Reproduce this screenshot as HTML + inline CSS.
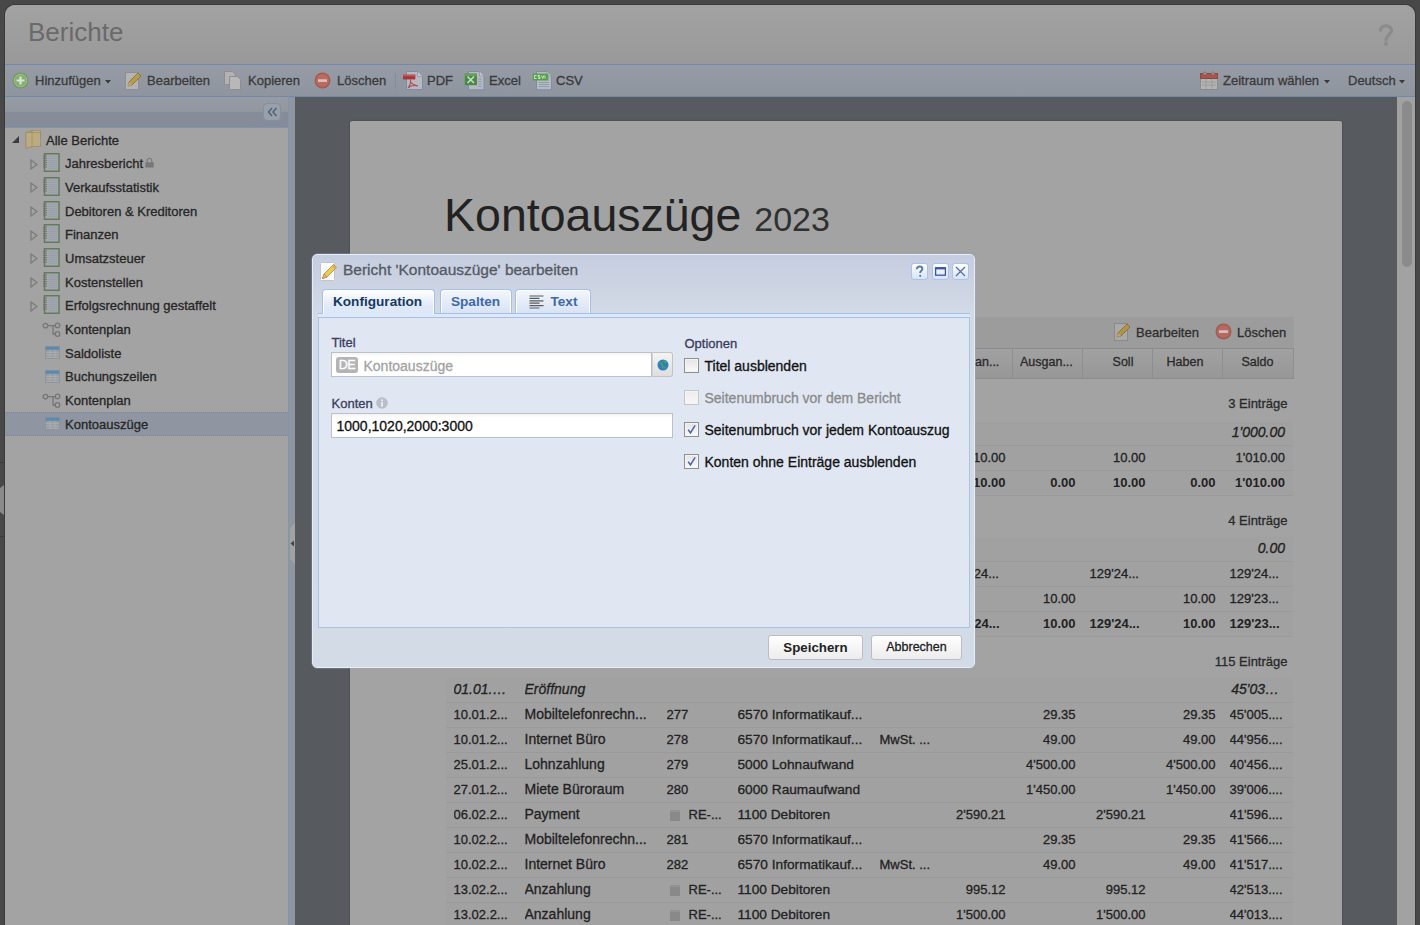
<!DOCTYPE html>
<html><head><meta charset="utf-8">
<style>
*{box-sizing:border-box;margin:0;padding:0}
html,body{width:1420px;height:925px;overflow:hidden;background:#484848;font-family:"Liberation Sans",sans-serif;-webkit-text-stroke:0.3px currentColor}
.abs{position:absolute}
#win{position:absolute;left:5px;top:5px;width:1410px;height:930px;border-radius:10px 10px 0 0;overflow:hidden;background:#a3a3a3;box-shadow:0 0 0 1px #3a3a3a}
#titlebar{position:absolute;left:0;top:0;width:1410px;height:59px;background:linear-gradient(#a2a2a2,#999999)}
#titlebar .t{position:absolute;left:23px;top:12px;font-size:26px;color:#6a6a6a;letter-spacing:0px}
#titlebar .q{position:absolute;left:1373px;top:17px;font-size:24px;color:#8e8e8e;font-weight:bold}
#toolbar{position:absolute;left:0;top:59px;width:1410px;height:33px;background:linear-gradient(#969ba5,#8f959f);border-top:1px solid #7189aa;border-bottom:1px solid #7189aa}
.tb{position:absolute;top:8px;font-size:13px;color:#3a3a3a;white-space:nowrap;line-height:15px}
.ic{position:absolute}
#lp{position:absolute;left:0;top:92px;width:284px;height:840px;background:#a3a3a3;border-right:1px solid #8296b2}
#lphead{position:absolute;left:0;top:0;width:283px;height:31px;background:linear-gradient(#969ba4 0,#92979f 15px,#878d98 15px,#868c97 100%);border-bottom:1px solid #7f92ae}
.tr{position:absolute;left:0;width:283px;height:24px;font-size:13px;color:#262626;white-space:nowrap}
.tr span{position:absolute;top:4.6px;line-height:15px}
.tr.sel{background:#8f96a1;border-top:1px dotted #7d8698;border-bottom:1px dotted #7d8698}
.tr.sel span,.tr.sel .ic{margin-top:-1px}
#split{position:absolute;left:284px;top:92px;width:6px;height:840px;background:#90969f}
#main{position:absolute;left:290px;top:92px;width:1105px;height:840px;background:#575b60;overflow:hidden}
#paper{position:absolute;left:55px;top:24px;width:992px;height:900px;background:#a3a3a3;border-radius:2px;box-shadow:0 0 2px rgba(0,0,0,0.35)}
#sb{position:absolute;left:1392px;top:92px;width:18px;height:840px;background:#a2a2a2}
#thumb{position:absolute;left:5px;top:4px;width:10px;height:166px;background:#8b8b8b;border-radius:5px}

.ttl{font-family:"Liberation Sans",sans-serif}
.tt{font-size:13px;line-height:15px;color:#2e2e2e;white-space:nowrap}
.th{font-size:12.5px;line-height:15px;color:#2a2a2a;white-space:nowrap}
.sh{font-size:13px;line-height:15px;color:#2a2a2a;white-space:nowrap}
.row{background:#a1a1a1;border-bottom:1px solid #9a9a9a}
.ci,.cn,.cb{line-height:23px;white-space:nowrap;color:#222}
.ci{font-size:14px;font-style:italic}
.cn{font-size:13px}
.cn.d{font-size:14px}
.cn.k{font-size:13.7px}
.cb{font-size:13px;font-weight:bold}
.reic{display:inline-block;width:10px;height:11px;background:linear-gradient(#939393 0,#939393 2px,#898989 2px);margin:0 9px 0 3px;vertical-align:-2px}

#dlg{position:absolute;left:312px;top:254px;width:663px;height:414px;border:1px solid #e6edf7;border-radius:5px;background:linear-gradient(#c5cde0 0,#d2dae6 58px,#d3dbe6 100%);box-shadow:0 0 0 0.5px rgba(160,175,200,0.6)}
#dlg .abs{position:absolute}
.dtitle{font-size:15.5px;line-height:18px;color:#555a62;white-space:nowrap}
.hbtn{position:absolute;top:8px;width:17px;height:17px;border:1px solid #a9c3ea;border-radius:3px;background:linear-gradient(#ffffff,#d6e3f6)}
.hbtn svg{position:absolute;left:-1px;top:-1px}
.tab{position:absolute;top:34px;height:24px;border:1px solid #a3c0e8;border-bottom:none;border-radius:4px 4px 0 0;background:linear-gradient(#f3f6fc,#d8e3f4);box-shadow:inset 1px 1px 0 #fff,inset -1px 0 0 #fff}
.tab span{position:absolute;top:3.5px;font-size:13.6px;line-height:16px;font-weight:bold;color:#3d69a5;white-space:nowrap}
.tab.act{height:25px;background:linear-gradient(#ffffff,#dfe8f6 70%);z-index:2}
.tab.act span{color:#15395f}
#panel{position:absolute;left:5px;top:63px;width:652px;height:310px;background:#e0e7f3;border:1px solid #a9c2e6;border-top:none}
.lbl{font-size:13px;line-height:15px;color:#3b3c5c;white-space:nowrap}
.inp{background:linear-gradient(#f3f3f3 0,#fff 4px,#fff 100%);border:1px solid #bcc0c8}
.opt{font-size:14px;line-height:16px;color:#111;white-space:nowrap}
.chkb{position:absolute;left:365.5px;margin-top:-0.5px;width:15px;height:15px;border:1px solid #8f8f8f;background:linear-gradient(#e4e4e4,#fafafa);box-shadow:inset 0 0 0 1px #f4f4f4}
.chkb.dis{border-color:#c6c6c6;background:linear-gradient(#ececec,#f7f7f7)}
.btn{position:absolute;top:379.5px;height:25px;border:1px solid #bdbdbd;border-radius:3px;background:linear-gradient(#ffffff,#ececec);text-align:center}
.btn span{display:block;line-height:23px;color:#222}

#titlebar .t,.cb,.tab span,.btn span[style*="bold"],#titlebar .q,.ttl{-webkit-text-stroke:0}
</style></head><body>
<svg class="ic" style="left:0;top:440px" width="5" height="100" viewBox="0 0 5 100"><rect x="0" y="22" width="5" height="1" fill="#3a3a3a"/><rect x="0" y="96" width="5" height="1" fill="#3a3a3a"/><path d="M0 48l4-3v30l-4-3z" fill="#8a8a8a"/></svg>
<div id="win">
  <div id="titlebar"><div class="t">Berichte</div><svg class="ic" style="left:1373px;top:19px" width="16" height="23" viewBox="0 0 16 23"><path d="M2.5 6.2C2.5 3.5 5 1.8 8 1.8s5.5 1.8 5.5 4.6c0 3.5-5 4.5-5.5 9.5" fill="none" stroke="#8b8b8b" stroke-width="3.2" stroke-linecap="round"/><circle cx="8" cy="20" r="2" fill="#8b8b8b"/></svg></div>
  <div id="toolbar">
    <svg class="ic" style="left:7px;top:7px" width="17" height="17" viewBox="0 0 17 17"><circle cx="8.5" cy="8.5" r="8" fill="#6f9a5e"/><circle cx="8.5" cy="8.5" r="6.3" fill="#86ad72" stroke="#a9c79a" stroke-width="0.8"/><path d="M8.5 4.5v8M4.5 8.5h8" stroke="#d9e4d3" stroke-width="2.2"/></svg>
    <div class="tb" style="left:30px">Hinzufügen</div>
    <svg class="ic" style="left:100px;top:15px" width="6" height="4"><path d="M0 0h6L3 3.5z" fill="#3a3a3a"/></svg>
    <svg class="ic" style="left:120px;top:6px" width="18" height="19" viewBox="0 0 18 19"><rect x="0.5" y="1.5" width="13" height="17" fill="#b4b4b4" stroke="#8f8f8f"/><path d="M3 15l1-4 9-9 3 3-9 9z" fill="#b79c4c" stroke="#8a6a2a" stroke-width="0.8"/><path d="M3 15l1-4 3 3z" fill="#caa880"/></svg>
    <div class="tb" style="left:142px">Bearbeiten</div>
    <svg class="ic" style="left:218px;top:5px" width="20" height="20" viewBox="0 0 20 20"><path d="M1.5 1.5h8l3 3v10h-11z" fill="#b2b2b2" stroke="#8e8e8e"/><path d="M6.5 6.5h8l3 3v10h-11z" fill="#b8b8b8" stroke="#8e8e8e"/></svg>
    <div class="tb" style="left:243px">Kopieren</div>
    <svg class="ic" style="left:309px;top:7px" width="17" height="17" viewBox="0 0 17 17"><circle cx="8.5" cy="8.5" r="8" fill="#a85a52"/><circle cx="8.5" cy="8.5" r="6.5" fill="#b86b60"/><rect x="4" y="7.3" width="9" height="2.6" fill="#d9c4c0"/></svg>
    <div class="tb" style="left:332px">Löschen</div>
    <div class="abs" style="left:390px;top:8px;width:1px;height:16px;background:#7f8ea5"></div>
    <svg class="ic" style="left:397px;top:5px" width="23" height="22" viewBox="0 0 23 22"><path d="M4.5 1.5h11l5 5v13h-16z" fill="#b6b9c0" stroke="#7d8cab"/><path d="M15.5 1.5v5h5" fill="#c4c7cc" stroke="#8a97b0" stroke-width="0.8"/><rect x="1" y="4.7" width="12.3" height="4.7" fill="#a63538"/><rect x="1" y="4.7" width="12.3" height="1.6" fill="#bd5a5a"/><path d="M8.5 9.5c0.5 3-1 6.5-2.5 8.5M8.5 12c1.5 2 4 3.5 7.5 4M6.5 17.5c2-2 5-2.5 9.5-1.5" fill="none" stroke="#b44a4e" stroke-width="1.1"/></svg>
    <div class="tb" style="left:422px">PDF</div>
    <svg class="ic" style="left:458px;top:5px" width="23" height="22" viewBox="0 0 23 22"><path d="M5.5 1.5h11l4.5 4.5v13.8h-15.5z" fill="#b6b9c0" stroke="#7d8cab"/><path d="M16.5 1.5v4.5h4.5" fill="#c4c7cc" stroke="#8a97b0" stroke-width="0.8"/><path d="M15 9h4M15 11.5h4M15 14h4M15 16.5h4" stroke="#8e9ab0" stroke-width="0.9"/><rect x="1.8" y="3.6" width="12.2" height="11.6" fill="#4a8a46"/><rect x="1.8" y="3.6" width="12.2" height="2.5" fill="#62a05c"/><path d="M4.5 6.5l6.5 6.5M11 6.5l-6.5 6.5" stroke="#c9dcc5" stroke-width="1.6"/></svg>
    <div class="tb" style="left:484px">Excel</div>
    <svg class="ic" style="left:526px;top:5px" width="23" height="22" viewBox="0 0 23 22"><path d="M5.5 1.5h10.5l4.4 4.4v13.9h-14.9z" fill="#b6b9c0" stroke="#7d8cab"/><path d="M16 1.5v4.4h4.4" fill="#c4c7cc" stroke="#8a97b0" stroke-width="0.8"/><path d="M8 12.5h10M8 14.5h10M8 16.5h10" stroke="#8e9ab0" stroke-width="0.9"/><rect x="1.8" y="3.6" width="15.5" height="6.9" fill="#56a04a"/><path d="M5.5 5.5h-2v3h2M9 5.5h-2v1.5h2v1.5h-2M10.5 5.5l1.2 3 1.2-3M14 5.5v3" fill="none" stroke="#d6e8d0" stroke-width="0.9"/></svg>
    <div class="tb" style="left:551px">CSV</div>
    <svg class="ic" style="left:1195px;top:6px" width="18" height="19" viewBox="0 0 18 19"><rect x="0.5" y="2.5" width="17" height="16" fill="#b3b3b3" stroke="#8a8a8a"/><rect x="0.5" y="2.5" width="17" height="5" fill="#a8544c" stroke="#8a4a44"/><circle cx="5" cy="2.5" r="1.5" fill="#9a9a9a" stroke="#6a6a6a" stroke-width="0.6"/><circle cx="13" cy="2.5" r="1.5" fill="#9a9a9a" stroke="#6a6a6a" stroke-width="0.6"/><path d="M2 11h14M2 14h14M6 8v10M12 8v10" stroke="#9c9c9c"/></svg>
    <div class="tb" style="left:1218px">Zeitraum wählen</div>
    <svg class="ic" style="left:1319px;top:15px" width="6" height="4"><path d="M0 0h6L3 3.5z" fill="#3a3a3a"/></svg>
    <div class="tb" style="left:1343px">Deutsch</div>
    <svg class="ic" style="left:1394px;top:15px" width="6" height="4"><path d="M0 0h6L3 3.5z" fill="#3a3a3a"/></svg>
  </div>
  <div id="lp"><div id="lphead"><div class="abs" style="left:258px;top:6px;width:18px;height:18px;border:1px solid #7f90a9;border-radius:4px;background:#9aa0a8"><svg class="ic" style="left:3px;top:3px" width="11" height="10" viewBox="0 0 11 10"><path d="M5 1L1.5 5 5 9M9.5 1L6 5l3.5 4" fill="none" stroke="#4f6582" stroke-width="1.6"/></svg></div></div>
<div class="tr" style="top:31.00px"><svg class="ic" style="left:7px;top:8px" width="8" height="8" viewBox="0 0 8 8"><path d="M7 0v7H0z" fill="#3c3c3c"/></svg><svg class="ic" style="left:20px;top:2px" width="18" height="19" viewBox="0 0 18 19"><path d="M1 2.5l6-2v16l-6 2z" fill="#b5a47c" stroke="#9a8a60" stroke-width="0.7"/><path d="M7 0.5h8.5v15.5H7z" fill="#c0b088" stroke="#9a8a60" stroke-width="0.7"/><path d="M1 2.5h14.5v14H7l-6 2z" fill="#bcab80" stroke="#998a62" stroke-width="0.7"/><path d="M7 1v15.5" stroke="#a39363" stroke-width="0.8"/><path d="M15 9.5l1.5 2-1 2.5" fill="#7fa8b8" stroke="none"/></svg><span style="left:41px">Alle Berichte</span></div>
<div class="tr" style="top:54.68px"><svg class="ic" style="left:25px;top:7px" width="8" height="11" viewBox="0 0 8 11"><path d="M1 1v9l6-4.5z" fill="none" stroke="#7c7c7c" stroke-width="1.3"/></svg><svg class="ic" style="left:38px;top:1.5px" width="17" height="19" viewBox="0 0 17 19"><rect x="1.5" y="0.75" width="14.5" height="17.5" fill="#a3a7ab" stroke="#627c5b" stroke-width="1.5"/><path d="M5.5 3.5h9M5.5 5.5h9M5.5 7.5h9M5.5 9.5h9M5.5 11.5h9M5.5 13.5h9M5.5 15.5h9" stroke="#959ca8" stroke-width="0.7"/><path d="M0 3h4M0 5.2h4M0 7.4h4M0 9.6h4M0 11.8h4M0 14h4" stroke="#6e6e6e" stroke-width="0.9"/></svg><span style="left:60px">Jahresbericht</span><svg class="ic" style="left:140px;top:5.5px" width="9" height="11" viewBox="0 0 9 11"><path d="M2.2 5.5V3.6a2.3 2.3 0 0 1 4.6 0V5.5" fill="none" stroke="#7a7a7a" stroke-width="1.1"/><rect x="0.3" y="5.3" width="8.4" height="5.2" rx="0.5" fill="#787878"/></svg></div>
<div class="tr" style="top:78.36px"><svg class="ic" style="left:25px;top:7px" width="8" height="11" viewBox="0 0 8 11"><path d="M1 1v9l6-4.5z" fill="none" stroke="#7c7c7c" stroke-width="1.3"/></svg><svg class="ic" style="left:38px;top:1.5px" width="17" height="19" viewBox="0 0 17 19"><rect x="1.5" y="0.75" width="14.5" height="17.5" fill="#a3a7ab" stroke="#627c5b" stroke-width="1.5"/><path d="M5.5 3.5h9M5.5 5.5h9M5.5 7.5h9M5.5 9.5h9M5.5 11.5h9M5.5 13.5h9M5.5 15.5h9" stroke="#959ca8" stroke-width="0.7"/><path d="M0 3h4M0 5.2h4M0 7.4h4M0 9.6h4M0 11.8h4M0 14h4" stroke="#6e6e6e" stroke-width="0.9"/></svg><span style="left:60px">Verkaufsstatistik</span></div>
<div class="tr" style="top:102.04px"><svg class="ic" style="left:25px;top:7px" width="8" height="11" viewBox="0 0 8 11"><path d="M1 1v9l6-4.5z" fill="none" stroke="#7c7c7c" stroke-width="1.3"/></svg><svg class="ic" style="left:38px;top:1.5px" width="17" height="19" viewBox="0 0 17 19"><rect x="1.5" y="0.75" width="14.5" height="17.5" fill="#a3a7ab" stroke="#627c5b" stroke-width="1.5"/><path d="M5.5 3.5h9M5.5 5.5h9M5.5 7.5h9M5.5 9.5h9M5.5 11.5h9M5.5 13.5h9M5.5 15.5h9" stroke="#959ca8" stroke-width="0.7"/><path d="M0 3h4M0 5.2h4M0 7.4h4M0 9.6h4M0 11.8h4M0 14h4" stroke="#6e6e6e" stroke-width="0.9"/></svg><span style="left:60px">Debitoren &amp; Kreditoren</span></div>
<div class="tr" style="top:125.72px"><svg class="ic" style="left:25px;top:7px" width="8" height="11" viewBox="0 0 8 11"><path d="M1 1v9l6-4.5z" fill="none" stroke="#7c7c7c" stroke-width="1.3"/></svg><svg class="ic" style="left:38px;top:1.5px" width="17" height="19" viewBox="0 0 17 19"><rect x="1.5" y="0.75" width="14.5" height="17.5" fill="#a3a7ab" stroke="#627c5b" stroke-width="1.5"/><path d="M5.5 3.5h9M5.5 5.5h9M5.5 7.5h9M5.5 9.5h9M5.5 11.5h9M5.5 13.5h9M5.5 15.5h9" stroke="#959ca8" stroke-width="0.7"/><path d="M0 3h4M0 5.2h4M0 7.4h4M0 9.6h4M0 11.8h4M0 14h4" stroke="#6e6e6e" stroke-width="0.9"/></svg><span style="left:60px">Finanzen</span></div>
<div class="tr" style="top:149.40px"><svg class="ic" style="left:25px;top:7px" width="8" height="11" viewBox="0 0 8 11"><path d="M1 1v9l6-4.5z" fill="none" stroke="#7c7c7c" stroke-width="1.3"/></svg><svg class="ic" style="left:38px;top:1.5px" width="17" height="19" viewBox="0 0 17 19"><rect x="1.5" y="0.75" width="14.5" height="17.5" fill="#a3a7ab" stroke="#627c5b" stroke-width="1.5"/><path d="M5.5 3.5h9M5.5 5.5h9M5.5 7.5h9M5.5 9.5h9M5.5 11.5h9M5.5 13.5h9M5.5 15.5h9" stroke="#959ca8" stroke-width="0.7"/><path d="M0 3h4M0 5.2h4M0 7.4h4M0 9.6h4M0 11.8h4M0 14h4" stroke="#6e6e6e" stroke-width="0.9"/></svg><span style="left:60px">Umsatzsteuer</span></div>
<div class="tr" style="top:173.08px"><svg class="ic" style="left:25px;top:7px" width="8" height="11" viewBox="0 0 8 11"><path d="M1 1v9l6-4.5z" fill="none" stroke="#7c7c7c" stroke-width="1.3"/></svg><svg class="ic" style="left:38px;top:1.5px" width="17" height="19" viewBox="0 0 17 19"><rect x="1.5" y="0.75" width="14.5" height="17.5" fill="#a3a7ab" stroke="#627c5b" stroke-width="1.5"/><path d="M5.5 3.5h9M5.5 5.5h9M5.5 7.5h9M5.5 9.5h9M5.5 11.5h9M5.5 13.5h9M5.5 15.5h9" stroke="#959ca8" stroke-width="0.7"/><path d="M0 3h4M0 5.2h4M0 7.4h4M0 9.6h4M0 11.8h4M0 14h4" stroke="#6e6e6e" stroke-width="0.9"/></svg><span style="left:60px">Kostenstellen</span></div>
<div class="tr" style="top:196.76px"><svg class="ic" style="left:25px;top:7px" width="8" height="11" viewBox="0 0 8 11"><path d="M1 1v9l6-4.5z" fill="none" stroke="#7c7c7c" stroke-width="1.3"/></svg><svg class="ic" style="left:38px;top:1.5px" width="17" height="19" viewBox="0 0 17 19"><rect x="1.5" y="0.75" width="14.5" height="17.5" fill="#a3a7ab" stroke="#627c5b" stroke-width="1.5"/><path d="M5.5 3.5h9M5.5 5.5h9M5.5 7.5h9M5.5 9.5h9M5.5 11.5h9M5.5 13.5h9M5.5 15.5h9" stroke="#959ca8" stroke-width="0.7"/><path d="M0 3h4M0 5.2h4M0 7.4h4M0 9.6h4M0 11.8h4M0 14h4" stroke="#6e6e6e" stroke-width="0.9"/></svg><span style="left:60px">Erfolgsrechnung gestaffelt</span></div>
<div class="tr" style="top:220.44px"><svg class="ic" style="left:37px;top:4px" width="20" height="17" viewBox="0 0 20 17"><path d="M5.6 4.6h5.4v8.4h3M11 4.6h2.8" fill="none" stroke="#767676" stroke-width="1.3"/><circle cx="3.4" cy="4.6" r="2.3" fill="#a3a3a3" stroke="#767676" stroke-width="1.3"/><circle cx="15.5" cy="4.4" r="2.3" fill="#a3a3a3" stroke="#767676" stroke-width="1.3"/><circle cx="15.5" cy="13" r="2.3" fill="#a3a3a3" stroke="#767676" stroke-width="1.3"/></svg><span style="left:60px">Kontenplan</span></div>
<div class="tr" style="top:244.12px"><svg class="ic" style="left:40px;top:5px" width="15" height="13" viewBox="0 0 15 13"><rect x="0" y="0" width="15" height="13" fill="#969ca1"/><rect x="0" y="0" width="15" height="3.8" fill="#5a8ab2"/><path d="M0 6.3h15M0 9h15M0 11.7h15M5 3.8v9.2M10 3.8v9.2" stroke="#adb2b6" stroke-width="0.8"/><rect x="0.4" y="0.4" width="14.2" height="12.2" fill="none" stroke="#899096" stroke-width="0.8"/></svg><span style="left:60px">Saldoliste</span></div>
<div class="tr" style="top:267.80px"><svg class="ic" style="left:40px;top:5px" width="15" height="13" viewBox="0 0 15 13"><rect x="0" y="0" width="15" height="13" fill="#969ca1"/><rect x="0" y="0" width="15" height="3.8" fill="#5a8ab2"/><path d="M0 6.3h15M0 9h15M0 11.7h15M5 3.8v9.2M10 3.8v9.2" stroke="#adb2b6" stroke-width="0.8"/><rect x="0.4" y="0.4" width="14.2" height="12.2" fill="none" stroke="#899096" stroke-width="0.8"/></svg><span style="left:60px">Buchungszeilen</span></div>
<div class="tr" style="top:291.48px"><svg class="ic" style="left:37px;top:4px" width="20" height="17" viewBox="0 0 20 17"><path d="M5.6 4.6h5.4v8.4h3M11 4.6h2.8" fill="none" stroke="#767676" stroke-width="1.3"/><circle cx="3.4" cy="4.6" r="2.3" fill="#a3a3a3" stroke="#767676" stroke-width="1.3"/><circle cx="15.5" cy="4.4" r="2.3" fill="#a3a3a3" stroke="#767676" stroke-width="1.3"/><circle cx="15.5" cy="13" r="2.3" fill="#a3a3a3" stroke="#767676" stroke-width="1.3"/></svg><span style="left:60px">Kontenplan</span></div>
<div class="tr sel" style="top:315.16px"><svg class="ic" style="left:40px;top:5px" width="15" height="13" viewBox="0 0 15 13"><rect x="0" y="0" width="15" height="13" fill="#969ca1"/><rect x="0" y="0" width="15" height="3.8" fill="#5a8ab2"/><path d="M0 6.3h15M0 9h15M0 11.7h15M5 3.8v9.2M10 3.8v9.2" stroke="#adb2b6" stroke-width="0.8"/><rect x="0.4" y="0.4" width="14.2" height="12.2" fill="none" stroke="#899096" stroke-width="0.8"/></svg><span style="left:60px">Kontoauszüge</span></div></div>
  <div id="split"><svg class="ic" style="left:0;top:426px" width="6" height="41" viewBox="0 0 6 41"><path d="M6 0v41L1 36V5z" fill="#a2a2a2"/><path d="M5 17.5v6L1.5 20.5z" fill="#454545"/></svg></div>
  <div id="main"><div id="paper">
<div class="abs ttl" style="left:94px;top:66px;font-size:46.5px;line-height:56px;color:#222;white-space:nowrap">Kontoauszüge <span style="font-size:34px;color:#303030">2023</span></div>
<div class="abs" style="left:96px;top:196px;width:848px;height:31px;background:#9c9c9c"></div>
<svg class="ic" style="left:764px;top:201px" width="18" height="19" viewBox="0 0 18 19"><rect x="0.5" y="1.5" width="13" height="17" fill="#a9a9a9" stroke="#8a8a8a"/><path d="M3 15l1-4 9-9 3 3-9 9z" fill="#b09548" stroke="#86672a" stroke-width="0.8"/><path d="M3 15l1-4 3 3z" fill="#c4a27a"/></svg>
<div class="abs tt" style="left:786px;top:204px">Bearbeiten</div>
<svg class="ic" style="left:865px;top:202px" width="17" height="17" viewBox="0 0 17 17"><circle cx="8.5" cy="8.5" r="8" fill="#a55a52"/><circle cx="8.5" cy="8.5" r="6.5" fill="#b46a60"/><rect x="4" y="7.3" width="9" height="2.6" fill="#d6c2be"/></svg>
<div class="abs tt" style="left:887px;top:204px">Löschen</div>
<div class="abs" style="left:96px;top:226.5px;width:848px;height:31px;background:linear-gradient(#a1a1a1,#979797);border-top:1px solid #8c8c8c;border-bottom:1px solid #8c8c8c"></div>
<div class="abs" style="left:167px;top:226.5px;width:1px;height:31px;background:#8e8e8e"></div>
<div class="abs" style="left:309px;top:226.5px;width:1px;height:31px;background:#8e8e8e"></div>
<div class="abs" style="left:380px;top:226.5px;width:1px;height:31px;background:#8e8e8e"></div>
<div class="abs" style="left:522px;top:226.5px;width:1px;height:31px;background:#8e8e8e"></div>
<div class="abs" style="left:592px;top:226.5px;width:1px;height:31px;background:#8e8e8e"></div>
<div class="abs" style="left:662px;top:226.5px;width:1px;height:31px;background:#8e8e8e"></div>
<div class="abs" style="left:732px;top:226.5px;width:1px;height:31px;background:#8e8e8e"></div>
<div class="abs" style="left:802px;top:226.5px;width:1px;height:31px;background:#8e8e8e"></div>
<div class="abs" style="left:872px;top:226.5px;width:1px;height:31px;background:#8e8e8e"></div>
<div class="abs" style="left:943px;top:226.5px;width:1px;height:31px;background:#8e8e8e"></div>
<div class="abs th" style="left:670px;top:233.5px;width:60px;overflow:hidden">Ausgan...</div>
<div class="abs th" style="left:738px;top:233.5px;width:70px;text-align:center">Soll</div>
<div class="abs th" style="left:800px;top:233.5px;width:70px;text-align:center">Haben</div>
<div class="abs th" style="left:872px;top:233.5px;width:71px;text-align:center">Saldo</div>
<div class="abs th" style="left:600px;top:233.5px;width:60px;overflow:hidden">Eingan...</div>
<div class="abs th" style="left:104px;top:233.5px;width:61px;overflow:hidden">Datum</div>
<div class="abs th" style="left:175px;top:233.5px;width:132px;overflow:hidden">Beschreibung</div>
<div class="abs th" style="left:317px;top:233.5px;width:61px;overflow:hidden">Beleg</div>
<div class="abs th" style="left:388px;top:233.5px;width:132px;overflow:hidden">Konto</div>
<div class="abs th" style="left:530px;top:233.5px;width:60px;overflow:hidden">MwSt.</div>
<div class="abs sh" style="left:96px;top:275.4px;width:841.5px;text-align:right">3 Einträge</div>
<div class="abs row" style="left:96px;top:299.80px;width:847px;height:24.95px"></div>
<div class="abs ci" style="left:872px;top:299.80px;width:63px;text-align:right">1'000.00</div>
<div class="abs row" style="left:96px;top:324.75px;width:847px;height:24.95px"></div>
<div class="abs cn" style="left:592px;top:324.75px;width:63.5px;text-align:right">10.00</div>
<div class="abs cn" style="left:732px;top:324.75px;width:63.5px;text-align:right">10.00</div>
<div class="abs cn" style="left:872px;top:324.75px;width:63px;text-align:right">1'010.00</div>
<div class="abs row" style="left:96px;top:349.70px;width:847px;height:24.95px"></div>
<div class="abs cb" style="left:592px;top:349.70px;width:63.5px;text-align:right">10.00</div>
<div class="abs cb" style="left:662px;top:349.70px;width:63.5px;text-align:right">0.00</div>
<div class="abs cb" style="left:732px;top:349.70px;width:63.5px;text-align:right">10.00</div>
<div class="abs cb" style="left:802px;top:349.70px;width:63.5px;text-align:right">0.00</div>
<div class="abs cb" style="left:872px;top:349.70px;width:63px;text-align:right">1'010.00</div>
<div class="abs sh" style="left:96px;top:391.6499999999999px;width:841.5px;text-align:right">4 Einträge</div>
<div class="abs row" style="left:96px;top:416.05px;width:847px;height:24.95px"></div>
<div class="abs ci" style="left:872px;top:416.05px;width:63px;text-align:right">0.00</div>
<div class="abs row" style="left:96px;top:441.00px;width:847px;height:24.95px"></div>
<div class="abs cn" style="left:599.5px;top:441.00px;width:56px;overflow:hidden">129'24...</div>
<div class="abs cn" style="left:739.5px;top:441.00px;width:56px;overflow:hidden">129'24...</div>
<div class="abs cn" style="left:879.5px;top:441.00px;width:57px;overflow:hidden">129'24...</div>
<div class="abs row" style="left:96px;top:465.95px;width:847px;height:24.95px"></div>
<div class="abs cn" style="left:662px;top:465.95px;width:63.5px;text-align:right">10.00</div>
<div class="abs cn" style="left:802px;top:465.95px;width:63.5px;text-align:right">10.00</div>
<div class="abs cn" style="left:879.5px;top:465.95px;width:57px;overflow:hidden">129'23...</div>
<div class="abs row" style="left:96px;top:490.90px;width:847px;height:24.95px"></div>
<div class="abs cb" style="left:599.5px;top:490.90px;width:56px;overflow:hidden">129'24...</div>
<div class="abs cb" style="left:662px;top:490.90px;width:63.5px;text-align:right">10.00</div>
<div class="abs cb" style="left:739.5px;top:490.90px;width:56px;overflow:hidden">129'24...</div>
<div class="abs cb" style="left:802px;top:490.90px;width:63.5px;text-align:right">10.00</div>
<div class="abs cb" style="left:879.5px;top:490.90px;width:57px;overflow:hidden">129'23...</div>
<div class="abs sh" style="left:96px;top:532.8500000000001px;width:841.5px;text-align:right">115 Einträge</div>
<div class="abs row" style="left:96px;top:557.25px;width:847px;height:24.95px"></div>
<div class="abs ci" style="left:103.5px;top:557.25px;width:57px;overflow:hidden">01.01.…</div>
<div class="abs ci" style="left:174.5px;top:557.25px;width:128px;overflow:hidden">Eröffnung</div>
<div class="abs ci" style="left:872px;top:557.25px;width:57px;text-align:right">45'03…</div>
<div class="abs row" style="left:96px;top:582.20px;width:847px;height:24.95px"></div>
<div class="abs cn" style="left:103.5px;top:582.20px;width:57px;overflow:hidden">10.01.2...</div>
<div class="abs cn d" style="left:174.5px;top:582.20px;width:128px;overflow:hidden">Mobiltelefonrechn...</div>
<div class="abs cn" style="left:316.5px;top:582.20px;width:57px;overflow:hidden">277</div>
<div class="abs cn k" style="left:387.5px;top:582.20px;width:128px;overflow:hidden">6570 Informatikauf...</div>
<div class="abs cn" style="left:662px;top:582.20px;width:63.5px;text-align:right">29.35</div>
<div class="abs cn" style="left:802px;top:582.20px;width:63.5px;text-align:right">29.35</div>
<div class="abs cn" style="left:879.5px;top:582.20px;width:57px;overflow:hidden">45'005....</div>
<div class="abs row" style="left:96px;top:607.15px;width:847px;height:24.95px"></div>
<div class="abs cn" style="left:103.5px;top:607.15px;width:57px;overflow:hidden">10.01.2...</div>
<div class="abs cn d" style="left:174.5px;top:607.15px;width:128px;overflow:hidden">Internet Büro</div>
<div class="abs cn" style="left:316.5px;top:607.15px;width:57px;overflow:hidden">278</div>
<div class="abs cn k" style="left:387.5px;top:607.15px;width:128px;overflow:hidden">6570 Informatikauf...</div>
<div class="abs cn" style="left:529.5px;top:607.15px;width:56px;overflow:hidden">MwSt. ...</div>
<div class="abs cn" style="left:662px;top:607.15px;width:63.5px;text-align:right">49.00</div>
<div class="abs cn" style="left:802px;top:607.15px;width:63.5px;text-align:right">49.00</div>
<div class="abs cn" style="left:879.5px;top:607.15px;width:57px;overflow:hidden">44'956....</div>
<div class="abs row" style="left:96px;top:632.10px;width:847px;height:24.95px"></div>
<div class="abs cn" style="left:103.5px;top:632.10px;width:57px;overflow:hidden">25.01.2...</div>
<div class="abs cn d" style="left:174.5px;top:632.10px;width:128px;overflow:hidden">Lohnzahlung</div>
<div class="abs cn" style="left:316.5px;top:632.10px;width:57px;overflow:hidden">279</div>
<div class="abs cn k" style="left:387.5px;top:632.10px;width:128px;overflow:hidden">5000 Lohnaufwand</div>
<div class="abs cn" style="left:662px;top:632.10px;width:63.5px;text-align:right">4'500.00</div>
<div class="abs cn" style="left:802px;top:632.10px;width:63.5px;text-align:right">4'500.00</div>
<div class="abs cn" style="left:879.5px;top:632.10px;width:57px;overflow:hidden">40'456....</div>
<div class="abs row" style="left:96px;top:657.05px;width:847px;height:24.95px"></div>
<div class="abs cn" style="left:103.5px;top:657.05px;width:57px;overflow:hidden">27.01.2...</div>
<div class="abs cn d" style="left:174.5px;top:657.05px;width:128px;overflow:hidden">Miete Büroraum</div>
<div class="abs cn" style="left:316.5px;top:657.05px;width:57px;overflow:hidden">280</div>
<div class="abs cn k" style="left:387.5px;top:657.05px;width:128px;overflow:hidden">6000 Raumaufwand</div>
<div class="abs cn" style="left:662px;top:657.05px;width:63.5px;text-align:right">1'450.00</div>
<div class="abs cn" style="left:802px;top:657.05px;width:63.5px;text-align:right">1'450.00</div>
<div class="abs cn" style="left:879.5px;top:657.05px;width:57px;overflow:hidden">39'006....</div>
<div class="abs row" style="left:96px;top:682.00px;width:847px;height:24.95px"></div>
<div class="abs cn" style="left:103.5px;top:682.00px;width:57px;overflow:hidden">06.02.2...</div>
<div class="abs cn d" style="left:174.5px;top:682.00px;width:128px;overflow:hidden">Payment</div>
<div class="abs cn" style="left:316.5px;top:682.00px;width:57px;overflow:hidden"><span class="reic"></span>RE-...</div>
<div class="abs cn k" style="left:387.5px;top:682.00px;width:128px;overflow:hidden">1100 Debitoren</div>
<div class="abs cn" style="left:592px;top:682.00px;width:63.5px;text-align:right">2'590.21</div>
<div class="abs cn" style="left:732px;top:682.00px;width:63.5px;text-align:right">2'590.21</div>
<div class="abs cn" style="left:879.5px;top:682.00px;width:57px;overflow:hidden">41'596....</div>
<div class="abs row" style="left:96px;top:706.95px;width:847px;height:24.95px"></div>
<div class="abs cn" style="left:103.5px;top:706.95px;width:57px;overflow:hidden">10.02.2...</div>
<div class="abs cn d" style="left:174.5px;top:706.95px;width:128px;overflow:hidden">Mobiltelefonrechn...</div>
<div class="abs cn" style="left:316.5px;top:706.95px;width:57px;overflow:hidden">281</div>
<div class="abs cn k" style="left:387.5px;top:706.95px;width:128px;overflow:hidden">6570 Informatikauf...</div>
<div class="abs cn" style="left:662px;top:706.95px;width:63.5px;text-align:right">29.35</div>
<div class="abs cn" style="left:802px;top:706.95px;width:63.5px;text-align:right">29.35</div>
<div class="abs cn" style="left:879.5px;top:706.95px;width:57px;overflow:hidden">41'566....</div>
<div class="abs row" style="left:96px;top:731.90px;width:847px;height:24.95px"></div>
<div class="abs cn" style="left:103.5px;top:731.90px;width:57px;overflow:hidden">10.02.2...</div>
<div class="abs cn d" style="left:174.5px;top:731.90px;width:128px;overflow:hidden">Internet Büro</div>
<div class="abs cn" style="left:316.5px;top:731.90px;width:57px;overflow:hidden">282</div>
<div class="abs cn k" style="left:387.5px;top:731.90px;width:128px;overflow:hidden">6570 Informatikauf...</div>
<div class="abs cn" style="left:529.5px;top:731.90px;width:56px;overflow:hidden">MwSt. ...</div>
<div class="abs cn" style="left:662px;top:731.90px;width:63.5px;text-align:right">49.00</div>
<div class="abs cn" style="left:802px;top:731.90px;width:63.5px;text-align:right">49.00</div>
<div class="abs cn" style="left:879.5px;top:731.90px;width:57px;overflow:hidden">41'517....</div>
<div class="abs row" style="left:96px;top:756.85px;width:847px;height:24.95px"></div>
<div class="abs cn" style="left:103.5px;top:756.85px;width:57px;overflow:hidden">13.02.2...</div>
<div class="abs cn d" style="left:174.5px;top:756.85px;width:128px;overflow:hidden">Anzahlung</div>
<div class="abs cn" style="left:316.5px;top:756.85px;width:57px;overflow:hidden"><span class="reic"></span>RE-...</div>
<div class="abs cn k" style="left:387.5px;top:756.85px;width:128px;overflow:hidden">1100 Debitoren</div>
<div class="abs cn" style="left:592px;top:756.85px;width:63.5px;text-align:right">995.12</div>
<div class="abs cn" style="left:732px;top:756.85px;width:63.5px;text-align:right">995.12</div>
<div class="abs cn" style="left:879.5px;top:756.85px;width:57px;overflow:hidden">42'513....</div>
<div class="abs row" style="left:96px;top:781.80px;width:847px;height:24.95px"></div>
<div class="abs cn" style="left:103.5px;top:781.80px;width:57px;overflow:hidden">13.02.2...</div>
<div class="abs cn d" style="left:174.5px;top:781.80px;width:128px;overflow:hidden">Anzahlung</div>
<div class="abs cn" style="left:316.5px;top:781.80px;width:57px;overflow:hidden"><span class="reic"></span>RE-...</div>
<div class="abs cn k" style="left:387.5px;top:781.80px;width:128px;overflow:hidden">1100 Debitoren</div>
<div class="abs cn" style="left:592px;top:781.80px;width:63.5px;text-align:right">1'500.00</div>
<div class="abs cn" style="left:732px;top:781.80px;width:63.5px;text-align:right">1'500.00</div>
<div class="abs cn" style="left:879.5px;top:781.80px;width:57px;overflow:hidden">44'013....</div>
</div></div>
  <div id="sb"><div id="thumb"></div></div>
</div>
<div id="dlg">
  <div class="abs" style="left:7px;top:7px;width:17px;height:19px">
    <svg width="17" height="19" viewBox="0 0 17 19"><rect x="0.5" y="0.5" width="14" height="18" rx="1" fill="#fbfbfb" stroke="#c2c6cc"/><path d="M2.5 16.5l1.5-4.5 9.5-9.5 3 3-9.5 9.5z" fill="#e8cc55" stroke="#b48a3a" stroke-width="0.8"/><path d="M2.5 16.5l1.5-4.5 3 3z" fill="#e5b98a" stroke="#a87a40" stroke-width="0.6"/><path d="M12.5 3.5l3 3" stroke="#e0a070" stroke-width="1.6"/></svg>
  </div>
  <div class="abs dtitle" style="left:30px;top:6px">Bericht 'Kontoauszüge' bearbeiten</div>
  <div class="hbtn" style="left:598px"><svg width="17" height="17" viewBox="0 0 17 17"><path d="M5.8 6.2c0-1.8 1.2-2.7 2.8-2.7s2.8 0.9 2.8 2.4c0 1.7-2.2 2-2.2 3.6v0.6" fill="none" stroke="#5a7ba6" stroke-width="1.9"/><circle cx="9.2" cy="12.8" r="1.1" fill="#5a7ba6"/></svg></div>
  <div class="hbtn" style="left:618.5px"><svg width="17" height="17" viewBox="0 0 17 17"><rect x="3.6" y="4.8" width="9.8" height="7.4" fill="none" stroke="#3a54a8" stroke-width="1.3"/><rect x="3.6" y="4.4" width="9.8" height="2" fill="#3a54a8"/></svg></div>
  <div class="hbtn" style="left:639px"><svg width="17" height="17" viewBox="0 0 17 17"><path d="M4 4l9 9M13 4l-9 9" stroke="#5a6ab0" stroke-width="1.3"/></svg></div>
  <!-- strip -->
  <div class="abs" style="left:5px;top:58px;width:652px;height:5px;background:#dfe8f6;border-top:1px solid #a3c0e8;border-bottom:1px solid #a3c0e8"></div>
  <!-- tabs -->
  <div class="tab act" style="left:8.5px;width:113px"><span style="left:10.5px">Konfiguration</span></div>
  <div class="tab" style="left:126.5px;width:72px"><span style="left:10.5px">Spalten</span></div>
  <div class="tab" style="left:202px;width:76px"><svg class="ic" style="left:13px;top:5px" width="15" height="14" viewBox="0 0 15 14"><path d="M0.5 1h14M0.5 3.4h10M0.5 5.8h14M0.5 8.2h10M0.5 10.6h14M0.5 13h10" stroke="#5c5c5c" stroke-width="1.2"/></svg><span style="left:34.5px">Text</span></div>
  <!-- panel -->
  <div id="panel"><div class="abs" style="left:-0.5px;top:0;width:650px;height:300px">
    <div class="abs lbl" style="left:13px;top:17px">Titel</div>
    <div class="abs inp" style="left:12.5px;top:34px;width:321px;height:25px"></div>
    <div class="abs" style="left:17.5px;top:39px;width:22px;height:16px;background:#b4b4b4;border-radius:3px;color:#fff;font-size:12.5px;line-height:16px;text-align:center;letter-spacing:-0.5px">DE</div>
    <div class="abs" style="left:45px;top:40px;font-size:14px;line-height:16px;color:#a3a3a3;white-space:nowrap">Kontoauszüge</div>
    <div class="abs" style="left:333px;top:34px;width:21px;height:25px;border:1px solid #c3c3c3;border-left:1px solid #d0d0d0;border-radius:0 3px 3px 0;background:linear-gradient(#f4f4f4,#dedede)"><svg class="ic" style="left:4px;top:6px" width="12" height="12" viewBox="0 0 12 12"><circle cx="6" cy="6" r="5.5" fill="#2f7fc0"/><path d="M2 4c1.5-1 2.5 0 3 1s0 2 1 3 2 0 2.5 1.5M7 1.5c0 1.5 1.5 2 3 1.5" fill="none" stroke="#4aa060" stroke-width="1.8"/></svg></div>
    <div class="abs lbl" style="left:13px;top:77.5px">Konten</div>
    <svg class="ic" style="left:57px;top:78.5px" width="12" height="12" viewBox="0 0 12 12"><circle cx="6" cy="6" r="5.8" fill="#babec9"/><rect x="5.1" y="5" width="1.8" height="4.6" fill="#eef0f4"/><circle cx="6" cy="3.2" r="1" fill="#eef0f4"/></svg>
    <div class="abs inp" style="left:12.5px;top:95px;width:342px;height:25px"></div>
    <div class="abs" style="left:18px;top:100px;font-size:14px;line-height:16px;color:#111;white-space:nowrap">1000,1020,2000:3000</div>
    <div class="abs lbl" style="left:366px;top:18px">Optionen</div>
    <div class="chkb" style="top:40.5px"></div><div class="abs opt" style="left:386px;top:40px">Titel ausblenden</div>
    <div class="chkb dis" style="top:72.5px"></div><div class="abs opt" style="left:386px;top:72px;color:#8a8a8a">Seitenumbruch vor dem Bericht</div>
    <div class="chkb chk" style="top:104.5px"><svg width="13" height="13" viewBox="0 0 13 13" style="position:absolute;left:0;top:0"><path d="M3.2 6.8l2.3 3.2 4.6-7.6" fill="none" stroke="#4563b5" stroke-width="1.5"/></svg></div><div class="abs opt" style="left:386px;top:104px">Seitenumbruch vor jedem Kontoauszug</div>
    <div class="chkb chk" style="top:136.5px"><svg width="13" height="13" viewBox="0 0 13 13" style="position:absolute;left:0;top:0"><path d="M3.2 6.8l2.3 3.2 4.6-7.6" fill="none" stroke="#4563b5" stroke-width="1.5"/></svg></div><div class="abs opt" style="left:386px;top:136px">Konten ohne Einträge ausblenden</div>
  </div></div>
  <div class="btn" style="left:455px;width:95px"><span style="font-weight:bold;font-size:13.3px">Speichern</span></div>
  <div class="btn" style="left:558px;width:91px"><span style="font-size:12.5px">Abbrechen</span></div>
</div>

</body></html>
